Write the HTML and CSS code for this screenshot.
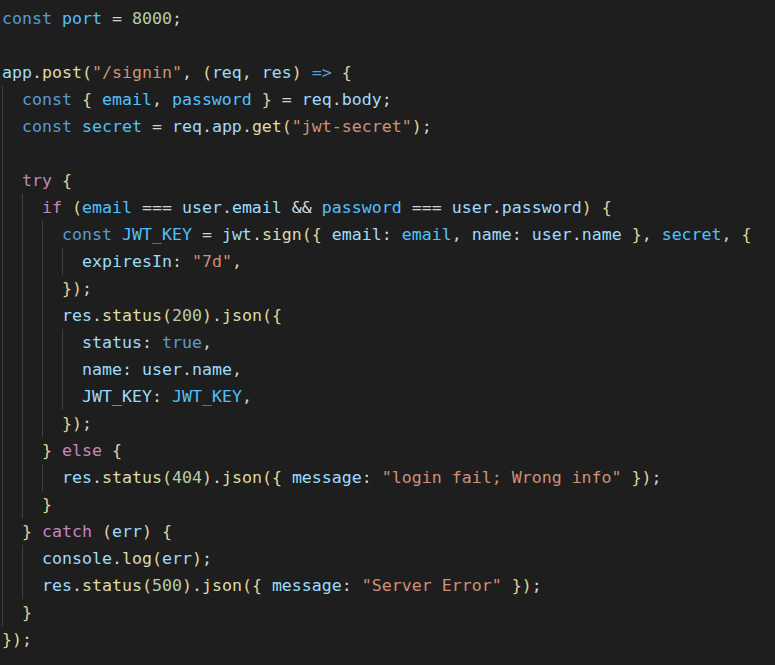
FILE: index.html
```html
<!DOCTYPE html>
<html lang="en">
<head>
<meta charset="utf-8">
<title>signin.js</title>
<link rel="stylesheet" href="styles.css">
</head>
<body>
<main class="editor">
<div class="ln"><span class="k">const</span> <span class="cv">port</span> <span class="p">=</span> <span class="n">8000</span><span class="p">;</span></div>
<div class="ln"> </div>
<div class="ln"><span class="v">app</span><span class="p">.</span><span class="f">post</span><span class="b">(</span><span class="s">"/signin"</span><span class="p">,</span> <span class="b">(</span><span class="v">req</span><span class="p">,</span> <span class="v">res</span><span class="b">)</span> <span class="k">=&gt;</span> <span class="b">{</span></div>
<div class="ln"><span class="ig"></span><span class="k">const</span> <span class="b">{</span> <span class="cv">email</span><span class="p">,</span> <span class="cv">password</span> <span class="b">}</span> <span class="p">=</span> <span class="v">req</span><span class="p">.</span><span class="v">body</span><span class="p">;</span></div>
<div class="ln"><span class="ig"></span><span class="k">const</span> <span class="cv">secret</span> <span class="p">=</span> <span class="v">req</span><span class="p">.</span><span class="v">app</span><span class="p">.</span><span class="f">get</span><span class="b">(</span><span class="s">"jwt-secret"</span><span class="b">)</span><span class="p">;</span></div>
<div class="ln"><span class="ig"></span></div>
<div class="ln"><span class="ig"></span><span class="c">try</span> <span class="b">{</span></div>
<div class="ln"><span class="ig"></span><span class="ig"></span><span class="c">if</span> <span class="b">(</span><span class="cv">email</span> <span class="p">===</span> <span class="v">user</span><span class="p">.</span><span class="v">email</span> <span class="p">&amp;&amp;</span> <span class="cv">password</span> <span class="p">===</span> <span class="v">user</span><span class="p">.</span><span class="v">password</span><span class="b">)</span> <span class="b">{</span></div>
<div class="ln"><span class="ig"></span><span class="ig"></span><span class="ig"></span><span class="k">const</span> <span class="cv">JWT_KEY</span> <span class="p">=</span> <span class="v">jwt</span><span class="p">.</span><span class="f">sign</span><span class="b">({</span> <span class="v">email</span><span class="p">:</span> <span class="cv">email</span><span class="p">,</span> <span class="v">name</span><span class="p">:</span> <span class="v">user</span><span class="p">.</span><span class="v">name</span> <span class="b">}</span><span class="p">,</span> <span class="cv">secret</span><span class="p">,</span> <span class="b">{</span></div>
<div class="ln"><span class="ig"></span><span class="ig"></span><span class="ig"></span><span class="ig"></span><span class="v">expiresIn</span><span class="p">:</span> <span class="s">"7d"</span><span class="p">,</span></div>
<div class="ln"><span class="ig"></span><span class="ig"></span><span class="ig"></span><span class="b">})</span><span class="p">;</span></div>
<div class="ln"><span class="ig"></span><span class="ig"></span><span class="ig"></span><span class="v">res</span><span class="p">.</span><span class="f">status</span><span class="b">(</span><span class="n">200</span><span class="b">)</span><span class="p">.</span><span class="f">json</span><span class="b">({</span></div>
<div class="ln"><span class="ig"></span><span class="ig"></span><span class="ig"></span><span class="ig"></span><span class="v">status</span><span class="p">:</span> <span class="k">true</span><span class="p">,</span></div>
<div class="ln"><span class="ig"></span><span class="ig"></span><span class="ig"></span><span class="ig"></span><span class="v">name</span><span class="p">:</span> <span class="v">user</span><span class="p">.</span><span class="v">name</span><span class="p">,</span></div>
<div class="ln"><span class="ig"></span><span class="ig"></span><span class="ig"></span><span class="ig"></span><span class="v">JWT_KEY</span><span class="p">:</span> <span class="cv">JWT_KEY</span><span class="p">,</span></div>
<div class="ln"><span class="ig"></span><span class="ig"></span><span class="ig"></span><span class="b">})</span><span class="p">;</span></div>
<div class="ln"><span class="ig"></span><span class="ig"></span><span class="b">}</span> <span class="c">else</span> <span class="b">{</span></div>
<div class="ln"><span class="ig"></span><span class="ig"></span><span class="ig"></span><span class="v">res</span><span class="p">.</span><span class="f">status</span><span class="b">(</span><span class="n">404</span><span class="b">)</span><span class="p">.</span><span class="f">json</span><span class="b">({</span> <span class="v">message</span><span class="p">:</span> <span class="s">"login fail; Wrong info"</span> <span class="b">})</span><span class="p">;</span></div>
<div class="ln"><span class="ig"></span><span class="ig"></span><span class="b">}</span></div>
<div class="ln"><span class="ig"></span><span class="b">}</span> <span class="c">catch</span> <span class="b">(</span><span class="v">err</span><span class="b">)</span> <span class="b">{</span></div>
<div class="ln"><span class="ig"></span><span class="ig"></span><span class="v">console</span><span class="p">.</span><span class="f">log</span><span class="b">(</span><span class="v">err</span><span class="b">)</span><span class="p">;</span></div>
<div class="ln"><span class="ig"></span><span class="ig"></span><span class="v">res</span><span class="p">.</span><span class="f">status</span><span class="b">(</span><span class="n">500</span><span class="b">)</span><span class="p">.</span><span class="f">json</span><span class="b">({</span> <span class="v">message</span><span class="p">:</span> <span class="s">"Server Error"</span> <span class="b">})</span><span class="p">;</span></div>
<div class="ln"><span class="ig"></span><span class="b">}</span></div>
<div class="ln"><span class="b">})</span><span class="p">;</span></div>
</main>
</body>
</html>
```

FILE: styles.css
```css
html, body {
  margin: 0;
  padding: 0;
  background: #1e1e1e;
}

.editor {
  display: flex;
  flex-direction: column;
  padding: 5px 0 0 2px;
  font-family: "DejaVu Sans Mono", "Liberation Mono", monospace;
  font-size: 16.6px;
  color: #d4d4d4;
}

.ln {
  height: 27px;
  line-height: 27px;
  white-space: pre;
}

.ig {
  display: inline-block;
  width: 20px;
  height: 27px;
  vertical-align: top;
  box-shadow: inset 1px 0 0 #404040;
}

.k { color: #569cd6; }
.c { color: #c586c0; }
.v { color: #9cdcfe; }
.cv { color: #4fc1ff; }
.f { color: #dcdcaa; }
.s { color: #ce9178; }
.n { color: #b5cea8; }
.p { color: #d4d4d4; }
.b { color: #e2d39a; }
```
